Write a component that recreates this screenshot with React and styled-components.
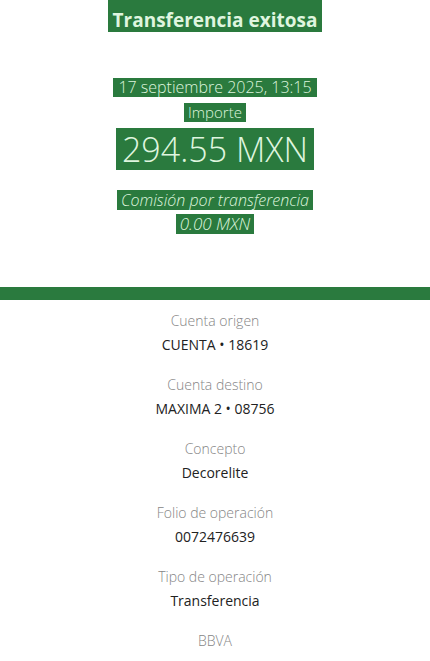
import styled, { createGlobalStyle } from "styled-components";

const Global = createGlobalStyle`
  body {
    margin: 0;
    background: #fff;
    font-family: "Open Sans", "Liberation Sans", sans-serif;
  }
`;

const GREEN = "#2a7a3e";
const LIGHT = "#dff5df";

const Page = styled.div`
  width: 430px;
  min-height: 661px;
  background: #fff;
  overflow: hidden;
`;

const Header = styled.div`
  display: flex;
  flex-direction: column;
  align-items: center;
  padding-bottom: 53px;
`;

const Mark = styled.span`
  display: inline-block;
  background: ${GREEN};
  color: ${LIGHT};
  font-size: ${(p) => p.size || 15}px;
  font-weight: ${(p) => p.weight || 400};
  font-style: ${(p) => (p.italic ? "italic" : "normal")};
  line-height: ${(p) => p.lh || 20}px;
  padding: ${(p) => p.pad || "0 4px"};
  margin-top: ${(p) => p.mt || 0}px;
`;

const Bar = styled.div`
  height: 13px;
  background: ${GREEN};
`;

const Details = styled.div`
  display: flex;
  flex-direction: column;
  align-items: center;
  gap: 20px;
  padding-top: 11px;
`;

const Item = styled.div`
  display: flex;
  flex-direction: column;
  align-items: center;
  gap: 4px;
`;

const Label = styled.div`
  color: #858585;
  font-size: 14px;
  font-weight: 300;
  line-height: 20px;
`;

const Value = styled.div`
  color: #222;
  font-size: 14px;
  line-height: 20px;
`;

const items = [
  ["Cuenta origen", "CUENTA • 18619"],
  ["Cuenta destino", "MAXIMA 2 • 08756"],
  ["Concepto", "Decorelite"],
  ["Folio de operación", "0072476639"],
  ["Tipo de operación", "Transferencia"],
  ["BBVA", ""],
];

export default function App() {
  return (
    <Page>
      <Global />
      <Header>
        <Mark size={19} weight={700} lh={24} pad="8px 5px 0">
          Transferencia exitosa
        </Mark>
        <Mark size={16} mt={46} lh={19} weight={300} pad="0 5px">
          17 septiembre 2025, 13:15
        </Mark>
        <Mark size={15} mt={6} lh={19} weight={300}>
          Importe
        </Mark>
        <Mark size={34} lh={42} weight={300} pad="0 6px" mt={6}>
          294.55 MXN
        </Mark>
        <Mark size={16} italic mt={20} lh={20} weight={300}>
          Comisión por transferencia
        </Mark>
        <Mark size={17} italic mt={4} lh={20} weight={300}>
          0.00 MXN
        </Mark>
      </Header>
      <Bar />
      <Details>
        {items.map(([l, v]) => (
          <Item key={l}>
            <Label>{l}</Label>
            {v && <Value>{v}</Value>}
          </Item>
        ))}
      </Details>
    </Page>
  );
}
